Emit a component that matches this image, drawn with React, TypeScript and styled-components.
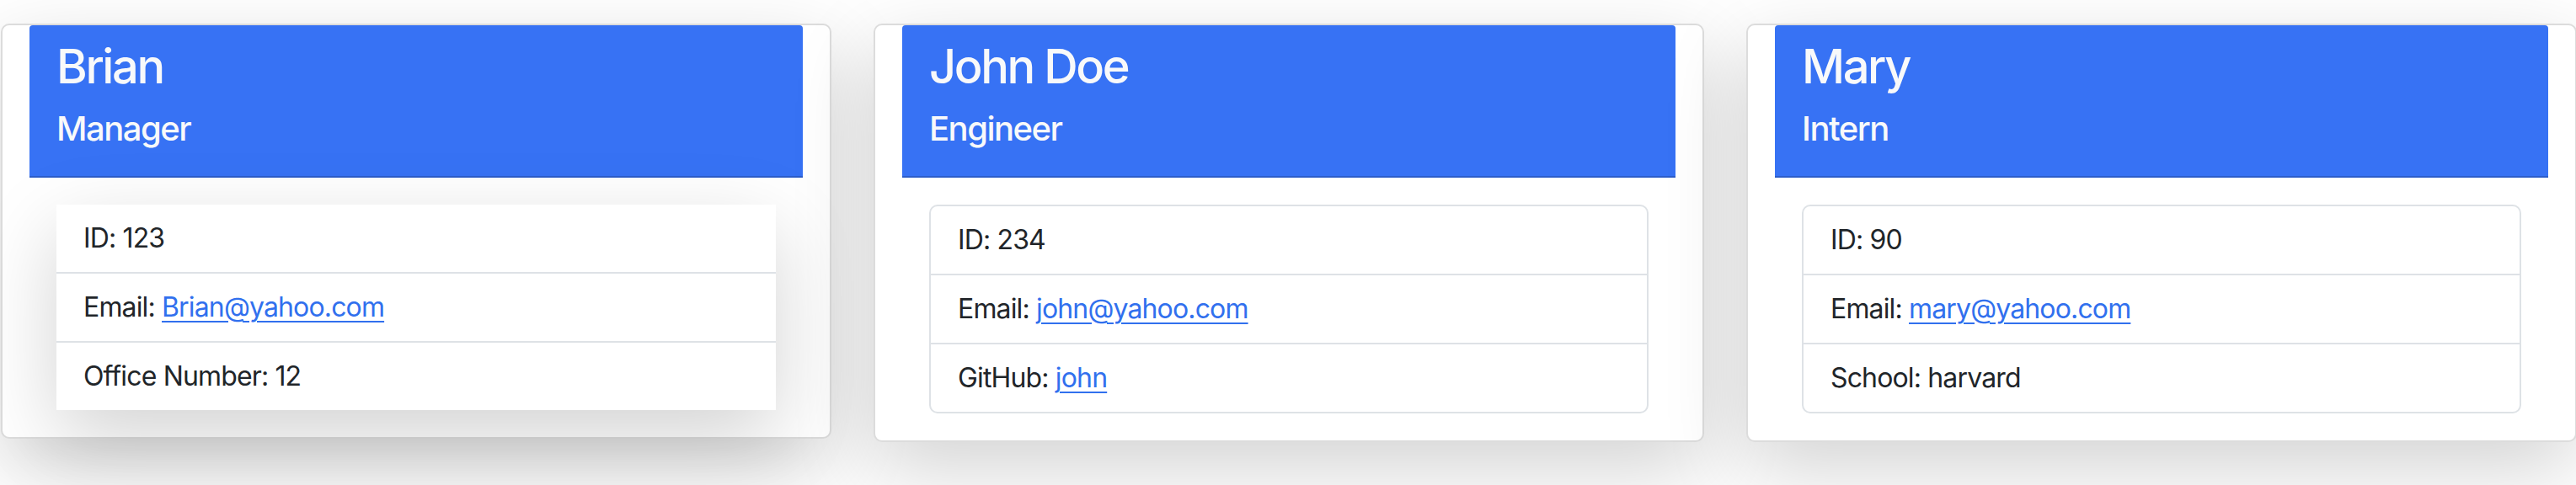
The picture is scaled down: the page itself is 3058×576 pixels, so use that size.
import React from "react";
import styled, { createGlobalStyle, css } from "styled-components";

const GlobalStyle = createGlobalStyle`
  html, body {
    margin: 0;
    padding: 0;
    overflow: hidden;
    background: #ffffff;
  }
  body {
    font-family: Inter, "Noto Sans", "Liberation Sans", sans-serif;
    color: #212529;
  }
`;

const Page = styled.div`
  display: flex;
  align-items: flex-start;
  gap: 50px;
  padding: 28px 0 60px 1px;
  width: max-content;
`;

const Card = styled.section`
  flex: none;
  width: 986px;
  box-sizing: border-box;
  background: #ffffff;
  border: 2px solid #dcdcdc;
  border-radius: 10px;
  box-shadow: 0 32px 96px rgba(0, 0, 0, 0.175);
  padding: 0 32px 32px;
`;

const Header = styled.header`
  background: #3772f4;
  color: #f8f9fa;
  padding: 16px 32px;
  border-bottom: 2px solid rgba(0, 0, 0, 0.175);
  border-radius: 4px 4px 0 0;
`;

const Name = styled.h2`
  margin: 0 0 16px;
  font-size: 56px;
  line-height: 1.2;
  font-weight: 500;
  letter-spacing: -2.4px;
`;

const Role = styled.h3`
  margin: 0 0 16px;
  font-size: 40px;
  line-height: 1.2;
  font-weight: 500;
  letter-spacing: -1.5px;
`;

const Body = styled.div`
  padding: 32px 32px 0;
`;

const List = styled.ul<{ $raised?: boolean }>`
  list-style: none;
  margin: 0;
  padding: 0;
  background: #ffffff;
  ${(p) =>
    p.$raised
      ? css`
          border: none;
          border-radius: 0;
          box-shadow: 0 32px 96px rgba(0, 0, 0, 0.175);
        `
      : css`
          border: 2px solid #dee2e6;
          border-radius: 10px;
        `}
`;

const Item = styled.li`
  padding: 16px 32px;
  font-size: 32px;
  line-height: 48px;
  letter-spacing: -0.85px;
  & + & {
    border-top: 2px solid #dee2e6;
  }
`;

const Link = styled.a`
  color: #3170ee;
  text-decoration: underline;
  text-decoration-thickness: 2px;
  text-underline-offset: 5px;
`;

type Employee = {
  name: string;
  role: string;
  id: string;
  email: string;
  extraLabel: string;
  extraValue: string;
  extraIsLink?: boolean;
  raised?: boolean;
};

const employees: Employee[] = [
  {
    name: "Brian",
    role: "Manager",
    id: "123",
    email: "Brian@yahoo.com",
    extraLabel: "Office Number",
    extraValue: "12",
    raised: true,
  },
  {
    name: "John Doe",
    role: "Engineer",
    id: "234",
    email: "john@yahoo.com",
    extraLabel: "GitHub",
    extraValue: "john",
    extraIsLink: true,
  },
  {
    name: "Mary",
    role: "Intern",
    id: "90",
    email: "mary@yahoo.com",
    extraLabel: "School",
    extraValue: "harvard",
  },
];

export default function App() {
  return (
    <>
      <GlobalStyle />
      <Page>
        {employees.map((e) => (
          <Card key={e.name}>
            <Header>
              <Name>{e.name}</Name>
              <Role>{e.role}</Role>
            </Header>
            <Body>
              <List $raised={e.raised}>
                <Item>ID: {e.id}</Item>
                <Item>
                  Email: <Link href={`mailto:${e.email}`}>{e.email}</Link>
                </Item>
                <Item>
                  {e.extraLabel}:{" "}
                  {e.extraIsLink ? (
                    <Link href={`https://github.com/${e.extraValue}`}>{e.extraValue}</Link>
                  ) : (
                    e.extraValue
                  )}
                </Item>
              </List>
            </Body>
          </Card>
        ))}
      </Page>
    </>
  );
}
